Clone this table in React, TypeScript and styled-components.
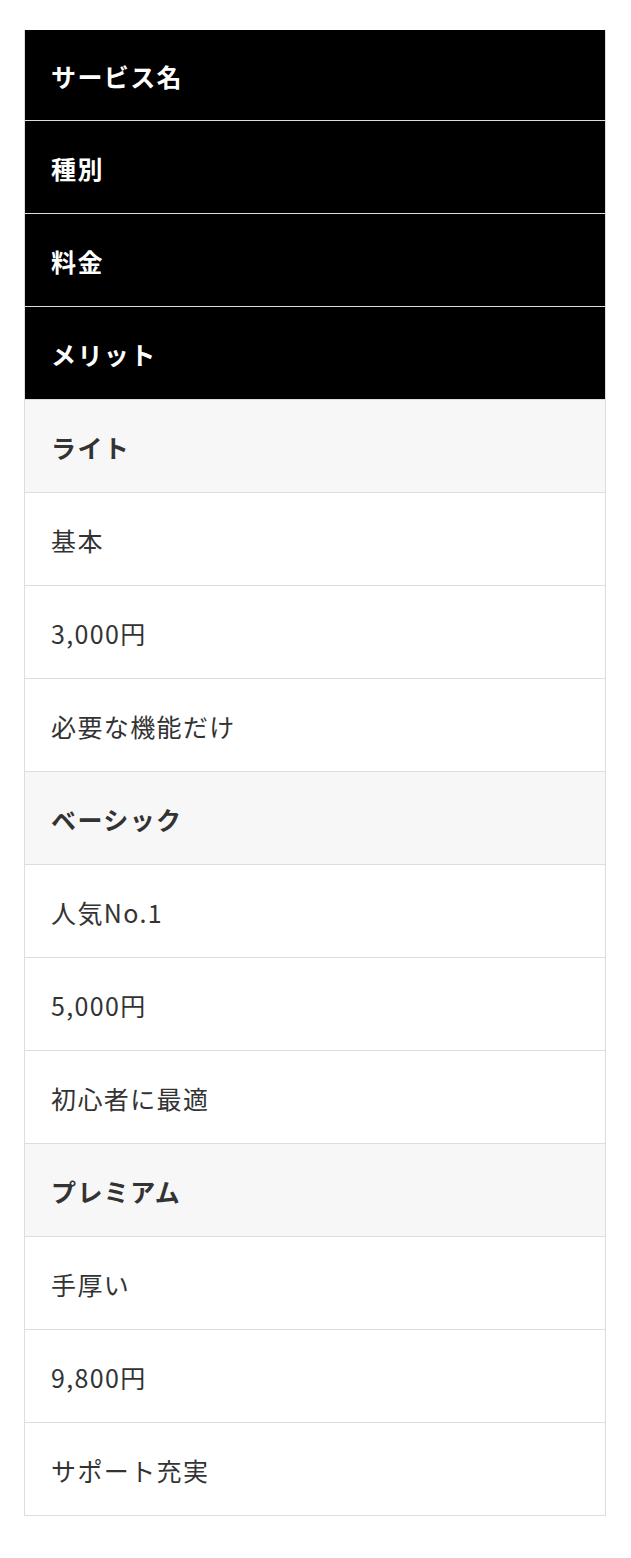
import React from 'react';
import styled, { createGlobalStyle } from 'styled-components';

const GlobalStyle = createGlobalStyle`
  html, body {
    margin: 0;
    padding: 0;
    background: #ffffff;
  }
  body {
    font-family: "Noto Sans CJK JP", "Noto Sans", sans-serif;
  }
`;

const Table = styled.div`
  margin: 30px 0 0 24px;
  width: 582px;
  box-sizing: border-box;
  border-left: 1px solid #dddddd;
  border-right: 1px solid #dddddd;
  display: flex;
  flex-direction: column;
`;

type CellKind = 'head' | 'plan' | 'data';

const Cell = styled.div<{ $kind: CellKind; $first?: boolean }>`
  box-sizing: border-box;
  height: ${({ $first }) => ($first ? 91 : 93)}px;
  display: flex;
  align-items: center;
  padding: 1px 26px 0;
  border-bottom: 1px solid #dddddd;
  font-size: 25px;
  letter-spacing: 0.055em;
  background: ${({ $kind }) => ($kind === 'head' ? '#000000' : $kind === 'plan' ? '#f7f7f7' : '#ffffff')};
  color: ${({ $kind }) => ($kind === 'head' ? '#ffffff' : '#333333')};
  font-weight: ${({ $kind }) => ($kind === 'data' ? 400 : 700)};
`;

const headers = ['サービス名', '種別', '料金', 'メリット'];

const plans = [
  { name: 'ライト', type: '基本', price: '3,000円', merit: '必要な機能だけ' },
  { name: 'ベーシック', type: '人気No.1', price: '5,000円', merit: '初心者に最適' },
  { name: 'プレミアム', type: '手厚い', price: '9,800円', merit: 'サポート充実' },
];

export default function App() {
  return (
    <>
      <GlobalStyle />
      <Table>
        {headers.map((h, i) => (
          <Cell key={h} $kind="head" $first={i === 0}>
            {h}
          </Cell>
        ))}
        {plans.map((p) => (
          <React.Fragment key={p.name}>
            <Cell $kind="plan">{p.name}</Cell>
            <Cell $kind="data">{p.type}</Cell>
            <Cell $kind="data">{p.price}</Cell>
            <Cell $kind="data">{p.merit}</Cell>
          </React.Fragment>
        ))}
      </Table>
    </>
  );
}
